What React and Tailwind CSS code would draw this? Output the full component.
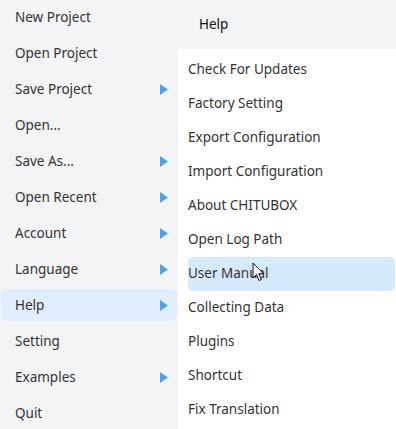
const leftItems = [
  { label: "New Project" },
  { label: "Open Project" },
  { label: "Save Project", sub: true },
  { label: "Open..." },
  { label: "Save As...", sub: true },
  { label: "Open Recent", sub: true },
  { label: "Account", sub: true },
  { label: "Language", sub: true },
  { label: "Help", sub: true, active: true },
  { label: "Setting" },
  { label: "Examples", sub: true },
  { label: "Quit" },
];

const helpItems = [
  "Check For Updates",
  "Factory Setting",
  "Export Configuration",
  "Import Configuration",
  "About CHITUBOX",
  "Open Log Path",
  "User Manual",
  "Collecting Data",
  "Plugins",
  "Shortcut",
  "Fix Translation",
];

const Arrow = () => (
  <svg width="8" height="11" viewBox="0 0 8 11" className="shrink-0">
    <path d="M0 0 L8 5.5 L0 11 Z" fill="#4ba4ec" />
  </svg>
);

const Cursor = () => (
  <svg width="13" height="20" viewBox="0 0 13 20" className="absolute left-[252px] top-[262px]">
    <path d="M1 1 L1 16 L4.5 12.5 L7 18.5 L9.3 17.5 L6.8 11.8 L11.5 11.8 Z" fill="#fff" stroke="#111" strokeWidth="1" strokeLinejoin="round" />
  </svg>
);

export default function App() {
  return (
    <div className="relative flex w-[396px] h-[429px] overflow-hidden bg-[#f3f4f6] text-[13.5px] text-[#333] font-['Noto_Sans','Open_Sans',sans-serif]">
      <div className="w-[178px] shrink-0 flex flex-col">
        {leftItems.map((it) => (
          <div key={it.label} className="h-[36px] shrink-0 pt-[1px] pb-[3px] px-[1px]">
            <div className={`h-full flex items-center justify-between pl-[14px] pr-[9px] rounded-[6px] ${it.active ? 'bg-[#e0eefd]' : ''}`}>
              <span>{it.label}</span>
              {it.sub && <Arrow />}
            </div>
          </div>
        ))}
      </div>
      <div className="flex-1 flex flex-col">
        <div className="h-[49px] shrink-0 flex items-center pl-[21px] text-[#111]">Help</div>
        <div className="flex-1 bg-white pt-[4px] pl-[10px] pr-[1px]">
          {helpItems.map((t) => (
            <div key={t} className={`h-[34px] flex items-center pb-[1px] rounded-[5px] ${t === 'User Manual' ? 'bg-[#d5eafd]' : ''}`}>
              {t}
            </div>
          ))}
        </div>
      </div>
      <Cursor />
    </div>
  );
}
